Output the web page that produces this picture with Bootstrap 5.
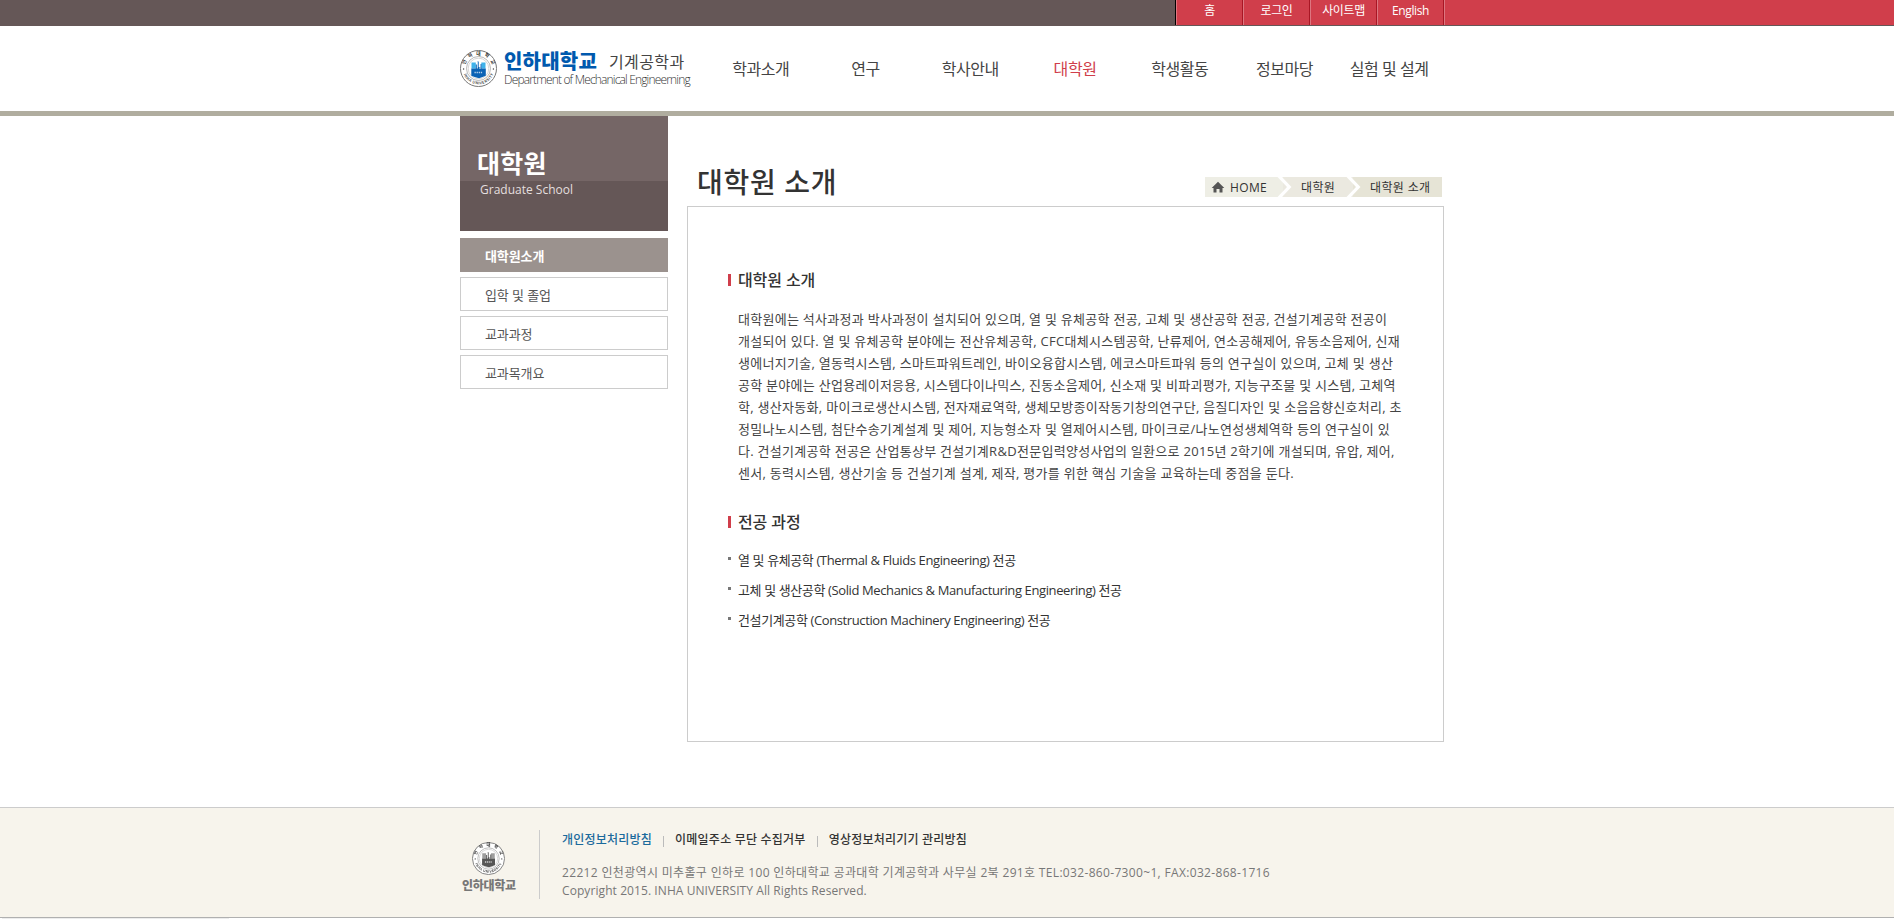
<!DOCTYPE html>
<html lang="ko">
<head>
<meta charset="utf-8">
<title>대학원 소개 | 인하대학교 기계공학과</title>
<link rel="stylesheet" href="https://cdn.jsdelivr.net/npm/bootstrap@5.3.0/dist/css/bootstrap.min.css">
<style>
body{font-family:"Open Sans","Noto Sans CJK KR",sans-serif;font-size:13px;color:#444;background:#fff;min-height:919px;overflow:hidden}
a{color:inherit;text-decoration:none}
.wrap{width:984px;margin-left:460px}
.topbar{height:26px;background:#655757}
.util{margin-left:1175px;height:25px;background:#d03e4b;border-left:1px solid #000;color:#fff;font-size:12px;line-height:21px;letter-spacing:-.4px}
.util a{width:67px;border-left:1px solid #dd7680;border-right:1px solid #a81624;text-align:center}
.util i{border-left:1px solid #dd7680}
.head{height:90px;border-bottom:5px solid #b0ad9f}
.brand{width:248.5px;padding-top:24px}
.brandtext{margin-left:7px;padding-top:2px}
.uname{font-size:20px;font-weight:900;color:#0059ae;line-height:20px;letter-spacing:.2px}
.dept{font-size:16px;color:#444;line-height:20px;margin-left:12px;letter-spacing:.4px}
.eng{font-size:12px;font-weight:300;color:#333;line-height:14px;letter-spacing:-.84px;padding-top:1px}
.gnb{width:733px;font-size:16px;color:#444;line-height:20px;padding-top:33px;letter-spacing:-.45px}
.gnb a{flex:1 1 0;text-align:center}
.gnb .on{color:#d03e4b}
.side{width:208px}
.sidehead{height:115px;background:linear-gradient(#756666 65px,#655757 65px);color:#fff;padding:32px 0 0 17px;margin-bottom:7px}
.sidehead h2{font-size:25px;font-weight:700;line-height:30px;margin:0 0 3px;letter-spacing:.2px}
.sidehead p{font-size:12px;line-height:18px;color:#e4dfdf;padding-left:3px;margin:0}
.lnb a{height:34px;border:1px solid #ccc;margin-bottom:5px;padding-left:24px;line-height:34px;color:#555;display:block;letter-spacing:-.1px}
.lnb .on{background:#9b928e;border-color:#9b928e;color:#fff;font-weight:700}
.main{width:757px;margin-left:19px}
.titlebar{height:90px;padding:46px 2px 0 10px}
.titlebar h1{font-size:28px;font-weight:500;color:#333;line-height:40px;margin:0;letter-spacing:.7px}
.crumb{width:237px;height:20px;margin-top:15px;font-size:12px;line-height:21px;color:#333;letter-spacing:.35px;background:linear-gradient(90deg,#eeeee5 78px,#ebe9e0 78px 148px,#e6e4d6 148px)}
.crumb span:nth-of-type(1){margin-left:25px;width:71px}
.crumb span:nth-of-type(2){width:69px}
.box{height:536px;border:1px solid #ccc;padding:61px 0 0 40px}
.box h3{font-size:16px;font-weight:500;color:#333;line-height:24px;margin:0;letter-spacing:-.1px}
.box h3::before{content:"";width:3px;height:12px;background:#d03e4b;margin-right:7px}
.para{margin:16px 0 26px 10px;line-height:22px;letter-spacing:.29px}
.para .tight{letter-spacing:.274px}
.dots{margin:11px 0 0;line-height:30px;color:#333;letter-spacing:-.385px}
.dots li::before{content:"";width:3px;height:3px;background:#777;margin:-3px 7px 0 0}
.foot{margin-top:65px;height:111px;background:#f7f4ec;border-top:1px solid #ccc;border-bottom:1px solid #b0b0b0}
.flogo{width:80px;height:69px;border-right:1px solid #ccc;margin-top:22px;padding:12px 24px 0 2px}
.flogo p{font-weight:900;font-size:12px;line-height:16px;color:#777;margin:3px 0 0;letter-spacing:-.3px}
.finfo{margin:23px 0 0 22px;font-size:12px;color:#777}
.flinks{color:#333;font-weight:500;line-height:18px;margin-bottom:15px;letter-spacing:.22px}
.flinks .policy{color:#1b6a9c}
.flinks i{width:1px;height:11px;background:#bbb;margin:2px 11px 0 11px}
.finfo p{line-height:18px;margin:0;letter-spacing:.333px}
.finfo .copy{letter-spacing:.08px}
.status{width:227px;height:2px;background:#ececec;margin-left:2px}
</style>
</head>
<body>
<svg width="0" height="0" class="position-absolute">
<defs>
<path id="arcT" d="M4.6 18.5a13.9 13.9 0 0 1 27.8 0"/>
<path id="arcB" d="M2.6 18.5a15.9 15.9 0 0 0 31.8 0"/>
<symbol id="seal" viewBox="0 0 37 37">
<circle cx="18.5" cy="18.5" r="18" fill="#fff" stroke="#777"/>
<circle cx="18.5" cy="18.5" r="12" fill="none" stroke="#888" stroke-width=".6"/>
<circle cx="18.5" cy="18.5" r="10.3" fill="none" stroke="#bbb" stroke-width=".6"/>
<g font-family="Noto Sans CJK KR" font-weight="700" fill="#333" text-anchor="middle">
<text font-size="4.8"><textPath href="#arcT" startOffset="50%" textLength="36">인하대학교</textPath></text>
<text font-size="3.8" fill="#555"><textPath href="#arcB" startOffset="50%" textLength="38">INHA UNIVERSITY</textPath></text>
</g>
<circle cx="3.6" cy="19" r=".7" fill="#444"/><circle cx="33.4" cy="19" r=".7" fill="#444"/>
<path d="M11.5 12.5h4.300v6h-4.300zM21.3 12.5h4.2v6h-4.2z" fill="#3fb2ea"/>
<path d="M11.3 18.5h4.500v-4h1.400v-3h1.500v5.500h1.500v-3h1.300v4.500h4.300v7.200q-3 1.300-6.800 2.600-5-1.300-7.700-2.600z" fill="currentColor"/>
<path d="M17.3 11.5v7M20 13v6" stroke="#fff" stroke-width=".9"/>
<path d="M14.5 22.5h8" stroke="#fff" stroke-width="1.6" stroke-dasharray="1.3 .8" opacity=".7"/>
</symbol>
</defs>
</svg>
<div class="topbar"><div class="util d-flex text-nowrap">
<a href="#">홈</a><a href="#">로그인</a><a href="#">사이트맵</a><a href="#">English</a><i></i>
</div></div>
<header class="head"><div class="wrap d-flex text-nowrap">
<a class="brand d-flex" href="#">
<svg width="37" height="37" color="#0a62b5"><use href="#seal"/></svg>
<div class="brandtext">
<div class="d-flex"><span class="uname">인하대학교</span><span class="dept">기계공학과</span></div>
<div class="eng">Department of Mechanical Engineerning</div>
</div></a>
<nav class="gnb d-flex">
<a href="#">학과소개</a><a href="#">연구</a><a href="#">학사안내</a><a href="#" class="on">대학원</a><a href="#">학생활동</a><a href="#">정보마당</a><a href="#">실험 및 설계</a>
</nav>
</div></header>
<div class="wrap d-flex text-nowrap">
<aside class="side">
<div class="sidehead"><h2>대학원</h2><p>Graduate School</p></div>
<nav class="lnb"><a class="on" href="#">대학원소개</a><a href="#">입학 및 졸업</a><a href="#">교과과정</a><a href="#">교과목개요</a></nav>
</aside>
<main class="main">
<div class="titlebar d-flex justify-content-between">
<h1>대학원 소개</h1>
<div class="crumb position-relative d-flex">
<svg class="position-absolute top-0 start-0" width="237" height="20"><path d="M72.500 0H77L86.500 10 77 20H72.500L82 10zM141.500 0H146L155.500 10 146 20H141.500L151 10z" fill="#fff"/><path d="M13 4.800 19.300 11H17.500v4.500H14.500v-3.500h-3v3.500H8.500V11H6.700z" fill="#555"/></svg>
<span>HOME</span><span>대학원</span><span>대학원 소개</span>
</div></div>
<div class="box">
<h3 class="d-flex align-items-center">대학원 소개</h3>
<div class="para">
<div class="tight">대학원에는 석사과정과 박사과정이 설치되어 있으며, 열 및 유체공학 전공, 고체 및 생산공학 전공, 건설기계공학 전공이</div>
<div>개설되어 있다. 열 및 유체공학 분야에는 전산유체공학, CFC대체시스템공학, 난류제어, 연소공해제어, 유동소음제어, 신재</div>
<div>생에너지기술, 열동력시스템, 스마트파워트레인, 바이오융합시스템, 에코스마트파워 등의 연구실이 있으며, 고체 및 생산</div>
<div class="tight">공학 분야에는 산업용레이저응용, 시스템다이나믹스, 진동소음제어, 신소재 및 비파괴평가, 지능구조물 및 시스템, 고체역</div>
<div>학, 생산자동화, 마이크로생산시스템, 전자재료역학, 생체모방종이작동기창의연구단, 음질디자인 및 소음음향신호처리, 초</div>
<div class="tight">정밀나노시스템, 첨단수송기계설계 및 제어, 지능형소자 및 열제어시스템, 마이크로/나노연성생체역학 등의 연구실이 있</div>
<div>다. 건설기계공학 전공은 산업통상부 건설기계R&amp;D전문입력양성사업의 일환으로 2015년 2학기에 개설되며, 유압, 제어,</div>
<div>센서, 동력시스템, 생산기술 등 건설기계 설계, 제작, 평가를 위한 핵심 기술을 교육하는데 중점을 둔다.</div>
</div>
<h3 class="d-flex align-items-center">전공 과정</h3>
<ul class="dots list-unstyled">
<li class="d-flex align-items-center">열 및 유체공학 (Thermal &amp; Fluids Engineering) 전공</li>
<li class="d-flex align-items-center">고체 및 생산공학 (Solid Mechanics &amp; Manufacturing Engineering) 전공</li>
<li class="d-flex align-items-center">건설기계공학 (Construction Machinery Engineering) 전공</li>
</ul>
</div>
</main>
</div>
<footer class="foot"><div class="wrap d-flex text-nowrap">
<div class="flogo text-center"><svg class="d-block mx-auto" width="33" height="33" color="#555" filter="grayscale(1)"><use href="#seal"/></svg><p>인하대학교</p></div>
<div class="finfo">
<div class="flinks d-flex align-items-center"><a href="#" class="policy">개인정보처리방침</a><i></i><a href="#">이메일주소 무단 수집거부</a><i></i><a href="#">영상정보처리기기 관리방침</a></div>
<p>22212 인천광역시 미추홀구 인하로 100 인하대학교 공과대학 기계공학과 사무실 2북 291호 TEL:032-860-7300~1, FAX:032-868-1716</p>
<p class="copy">Copyright 2015. INHA UNIVERSITY All Rights Reserved.</p>
</div>
</div></footer>
<div class="status"></div>
<script src="https://cdn.jsdelivr.net/npm/bootstrap@5.3.0/dist/js/bootstrap.bundle.min.js"></script>
</body>
</html>
